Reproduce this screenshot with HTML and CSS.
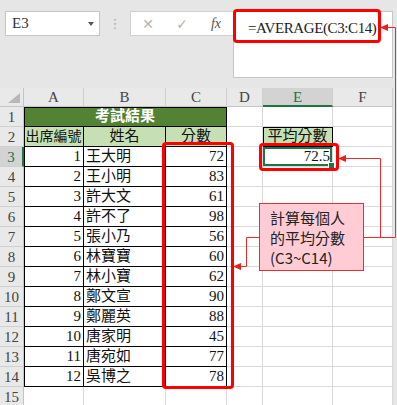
FILE: index.html
```html
<!DOCTYPE html>
<html lang="zh-Hant">
<head>
    <meta charset="UTF-8">
    <title>考試結果</title>
    <link rel="stylesheet" href="styles.css">
</head>
<body>
    <div class="toolbar">
        <div class="namebox">E3<span class="caret"></span></div>
        <div class="grip">⋮</div>
        <div class="fx-buttons">
            <span class="btn">✕</span>
            <span class="btn">✓</span>
            <span class="btn fx">fx</span>
        </div>
        <div class="formula">=AVERAGE(C3:C14)</div>
    </div>

    <div class="sheet">
        <!-- 欄標題 -->
        <div class="corner"></div>
        <div class="ch">A</div>
        <div class="ch">B</div>
        <div class="ch">C</div>
        <div class="ch">D</div>
        <div class="ch sel">E</div>
        <div class="ch">F</div>

        <!-- 1 -->
        <div class="rh">1</div>
        <div class="c t edge title">考試結果</div>
        <div class="c"></div>
        <div class="c"></div>
        <div class="c"></div>

        <!-- 2 -->
        <div class="rh">2</div>
        <div class="c t left head narrow">出席編號</div>
        <div class="c t head">姓名</div>
        <div class="c t head">分數</div>
        <div class="c"></div>
        <div class="c t edge head">平均分數</div>
        <div class="c"></div>

        <!-- 3 -->
        <div class="rh sel">3</div>
        <div class="c t left num">1</div>
        <div class="c t">王大明</div>
        <div class="c t num">72</div>
        <div class="c"></div>
        <div class="c num active">72.5</div>
        <div class="c"></div>

        <div class="rh">4</div>
        <div class="c t left num">2</div>
        <div class="c t">王小明</div>
        <div class="c t num">83</div>
        <div class="c"></div><div class="c"></div><div class="c"></div>

        <div class="rh">5</div>
        <div class="c t left num">3</div>
        <div class="c t">許大文</div>
        <div class="c t num">61</div>
        <div class="c"></div><div class="c"></div><div class="c"></div>

        <div class="rh">6</div>
        <div class="c t left num">4</div>
        <div class="c t">許不了</div>
        <div class="c t num">98</div>
        <div class="c"></div><div class="c"></div><div class="c"></div>

        <div class="rh">7</div>
        <div class="c t left num">5</div>
        <div class="c t">張小乃</div>
        <div class="c t num">56</div>
        <div class="c"></div><div class="c"></div><div class="c"></div>

        <div class="rh">8</div>
        <div class="c t left num">6</div>
        <div class="c t">林寶寶</div>
        <div class="c t num">60</div>
        <div class="c"></div><div class="c"></div><div class="c"></div>

        <div class="rh">9</div>
        <div class="c t left num">7</div>
        <div class="c t">林小寶</div>
        <div class="c t num">62</div>
        <div class="c"></div><div class="c"></div><div class="c"></div>

        <div class="rh">10</div>
        <div class="c t left num">8</div>
        <div class="c t">鄭文宣</div>
        <div class="c t num">90</div>
        <div class="c"></div><div class="c"></div><div class="c"></div>

        <div class="rh">11</div>
        <div class="c t left num">9</div>
        <div class="c t">鄭麗英</div>
        <div class="c t num">88</div>
        <div class="c"></div><div class="c"></div><div class="c"></div>

        <div class="rh">12</div>
        <div class="c t left num">10</div>
        <div class="c t">唐家明</div>
        <div class="c t num">45</div>
        <div class="c"></div><div class="c"></div><div class="c"></div>

        <div class="rh">13</div>
        <div class="c t left num">11</div>
        <div class="c t">唐宛如</div>
        <div class="c t num">77</div>
        <div class="c"></div><div class="c"></div><div class="c"></div>

        <div class="rh">14</div>
        <div class="c t left num">12</div>
        <div class="c t">吳博之</div>
        <div class="c t num">78</div>
        <div class="c"></div><div class="c"></div><div class="c"></div>

        <div class="rh">15</div>
        <div class="c"></div><div class="c"></div><div class="c"></div>
        <div class="c"></div><div class="c"></div><div class="c"></div>
    </div>

    <!-- 標示框與說明 -->
    <div class="mark mark-formula"></div>
    <div class="mark mark-scores"></div>
    <div class="mark mark-avg"></div>

    <div class="callout">計算每個人<br>的平均分數<br>(C3~C14)</div>

    <svg class="arrows" width="397" height="405" viewBox="0 0 397 405">
        <polyline points="364,237.5 395.5,237.5 395.5,27.5 387,27.5" />
        <polyline points="380.5,237.5 380.5,158.5 346,158.5" />
        <polyline points="259,237.5 246.5,237.5 246.5,266.5 240,266.5" />
        <polygon points="380,27.5 388,24 388,31" />
        <polygon points="338,158.5 346,155 346,162" />
        <polygon points="233,266.5 241,263 241,270" />
    </svg>
</body>
</html>
```

FILE: styles.css
```css
body {
    margin: 0;
    width: 397px;
    height: 405px;
    overflow: hidden;
    position: relative;
    background: #e6e6e6;
    font-family: 'Liberation Serif', 'Noto Sans CJK TC', serif;
    color: #222;
}

/* 資料編輯列 */
.toolbar {
    display: flex;
    align-items: flex-start;
    height: 88px;
    padding: 11px 0 0 5px;
    box-sizing: border-box;
}

.namebox {
    width: 95px;
    height: 25px;
    box-sizing: border-box;
    background: white;
    border: 1px solid #c6c6c6;
    display: flex;
    align-items: center;
    justify-content: space-between;
    padding: 0 5px 0 6px;
    font-size: 15px;
    color: #333;
}

.caret {
    border-left: 3px solid transparent;
    border-right: 3px solid transparent;
    border-top: 4px solid #555;
}

.grip {
    width: 30px;
    line-height: 25px;
    text-align: center;
    font-family: 'DejaVu Sans', sans-serif;
    font-size: 13px;
    color: #a6a6a6;
}

.fx-buttons {
    width: 103px;
    height: 25px;
    box-sizing: border-box;
    background: white;
    border: 1px solid #d0d0d0;
    border-right: none;
    display: flex;
    align-items: center;
}

.btn {
    width: 34px;
    text-align: center;
    font-family: 'DejaVu Sans', sans-serif;
    font-size: 14px;
    color: #b3b3b3;
}

.btn.fx {
    font-family: 'Liberation Serif', serif;
    font-style: italic;
    font-size: 14px;
    color: #555;
}

.formula {
    width: 160px;
    height: 67px;
    box-sizing: border-box;
    background: white;
    border: 1px solid #c6c6c6;
    padding: 5px 0 0 14px;
    font-size: 15px;
    letter-spacing: -0.4px;
    line-height: 22px;
    color: #222;
}

/* 工作表 */
.sheet {
    display: grid;
    grid-template-columns: 24px 60px 82px 61px 36px 70px 60px;
    grid-template-rows: 19px;
    grid-auto-rows: 20px;
    width: 393px;
    background: white;
}

.corner,
.ch,
.rh {
    background: #e9e9e9;
    color: #444;
    font-size: 15px;
    box-sizing: border-box;
}

.corner {
    position: relative;
    border-right: 1px solid #c4c4c4;
    border-bottom: 1px solid #c4c4c4;
}

.corner::after {
    content: '';
    position: absolute;
    right: 3px;
    bottom: 3px;
    border-left: 12px solid transparent;
    border-bottom: 10px solid #b8b8b8;
}

.ch {
    text-align: center;
    line-height: 19px;
    border-right: 1px solid #cfcfcf;
    border-bottom: 1px solid #c4c4c4;
}

.rh {
    text-align: center;
    line-height: 20px;
    border-right: 1px solid #c4c4c4;
    border-bottom: 1px solid #cfcfcf;
}

.ch.sel {
    background: #d3d3d3;
    color: #217346;
    border-bottom: 2px solid #217346;
}

.rh.sel {
    background: #d3d3d3;
    color: #217346;
    border-right: 2px solid #217346;
}

.c {
    box-sizing: border-box;
    border-right: 1px solid #d9d9d9;
    border-bottom: 1px solid #d9d9d9;
    padding: 0 2px;
    font-size: 15px;
    line-height: 19px;
    white-space: nowrap;
    color: #111;
}

.c.num {
    text-align: right;
}

/* 黑色框線 */
.c.t {
    border-right-color: #000;
    border-bottom-color: #000;
}

.c.left {
    box-shadow: inset 1px 0 0 #000;
}

.c.edge {
    box-shadow: inset 1px 1px 0 #000;
}

.title {
    grid-column: span 3;
    background: #548235;
    color: white;
    font-weight: bold;
    text-align: center;
}

.head {
    background: #c6e0b4;
    text-align: center;
}

.head.narrow {
    padding: 0;
    font-size: 14px;
}

.active {
    position: relative;
    box-shadow: inset 0 0 0 2px #217346;
}

.active::after {
    content: '';
    position: absolute;
    right: -3px;
    bottom: -3px;
    width: 5px;
    height: 5px;
    background: #217346;
    border: 1px solid white;
}

/* 紅色標示框 */
.mark {
    position: absolute;
    box-sizing: border-box;
    border: 3px solid #ff0000;
    border-radius: 4px;
}

.mark-formula {
    left: 233px;
    top: 9px;
    width: 148px;
    height: 34px;
}

.mark-scores {
    left: 162px;
    top: 142px;
    width: 72px;
    height: 247px;
}

.mark-avg {
    left: 259px;
    top: 143px;
    width: 80px;
    height: 28px;
}

.callout {
    position: absolute;
    left: 259px;
    top: 203px;
    width: 105px;
    height: 68px;
    box-sizing: border-box;
    padding: 4px 0 0 10px;
    background: #ffccd5;
    border: 1px solid #e53030;
    font-family: 'Noto Sans CJK TC', sans-serif;
    font-size: 15px;
    line-height: 20px;
    color: #222;
}

.arrows {
    position: absolute;
    left: 0;
    top: 0;
    pointer-events: none;
}

.arrows polyline {
    fill: none;
    stroke: #ee2a2a;
    stroke-width: 1;
}

.arrows polygon {
    fill: #ee1c1c;
}
```
